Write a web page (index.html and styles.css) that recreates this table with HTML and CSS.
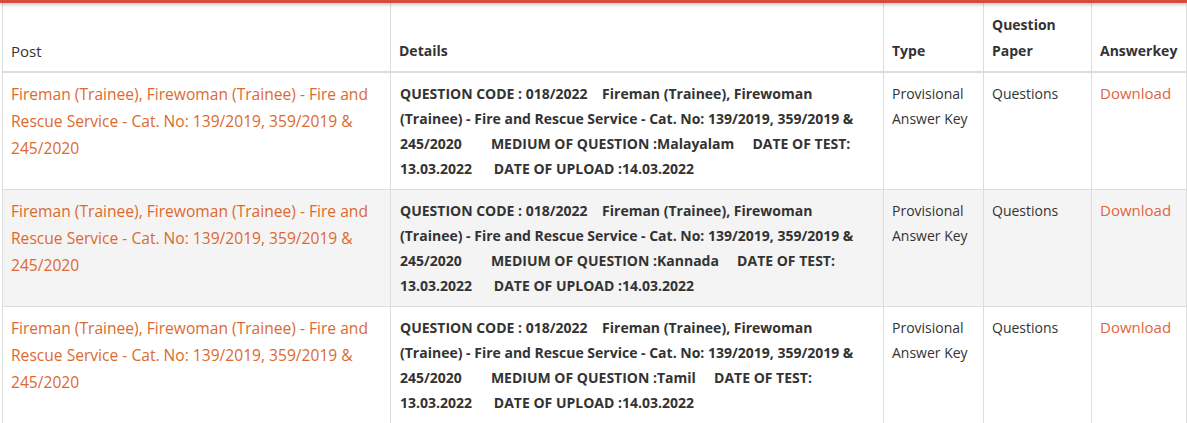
FILE: index.html
```html
<!DOCTYPE html>
<html>
<head>
<meta charset="utf-8">
<link rel="stylesheet" href="styles.css">
</head>
<body>
<div class="topbar"></div>
<div class="wrap">
<table class="results">
  <colgroup>
    <col class="c-post"><col class="c-details"><col class="c-type"><col class="c-qp"><col class="c-ak">
  </colgroup>
  <thead>
    <tr>
      <th class="th-post">Post</th>
      <th>Details</th>
      <th>Type</th>
      <th>Question Paper</th>
      <th>Answerkey</th>
    </tr>
  </thead>
  <tbody>
    <tr>
      <td class="post"><a href="#">Fireman (Trainee), Firewoman (Trainee) - Fire and Rescue Service - Cat. No: 139/2019, 359/2019 &amp; 245/2020</a></td>
      <td class="details">QUESTION CODE : 018/2022 &nbsp;&nbsp; Fireman (Trainee), Firewoman (Trainee) - Fire and Rescue Service - Cat. No: 139/2019, 359/2019 &amp; 245/2020 &nbsp;&nbsp;&nbsp;&nbsp;&nbsp;&nbsp; MEDIUM OF QUESTION :Malayalam &nbsp;&nbsp;&nbsp; DATE OF TEST: 13.03.2022 &nbsp;&nbsp;&nbsp;&nbsp; DATE OF UPLOAD :14.03.2022</td>
      <td>Provisional Answer Key</td>
      <td>Questions</td>
      <td><a class="dl" href="#">Download</a></td>
    </tr>
    <tr class="alt">
      <td class="post"><a href="#">Fireman (Trainee), Firewoman (Trainee) - Fire and Rescue Service - Cat. No: 139/2019, 359/2019 &amp; 245/2020</a></td>
      <td class="details">QUESTION CODE : 018/2022 &nbsp;&nbsp; Fireman (Trainee), Firewoman (Trainee) - Fire and Rescue Service - Cat. No: 139/2019, 359/2019 &amp; 245/2020 &nbsp;&nbsp;&nbsp;&nbsp;&nbsp;&nbsp; MEDIUM OF QUESTION :Kannada &nbsp;&nbsp;&nbsp; DATE OF TEST: 13.03.2022 &nbsp;&nbsp;&nbsp;&nbsp; DATE OF UPLOAD :14.03.2022</td>
      <td>Provisional Answer Key</td>
      <td>Questions</td>
      <td><a class="dl" href="#">Download</a></td>
    </tr>
    <tr>
      <td class="post"><a href="#">Fireman (Trainee), Firewoman (Trainee) - Fire and Rescue Service - Cat. No: 139/2019, 359/2019 &amp; 245/2020</a></td>
      <td class="details">QUESTION CODE : 018/2022 &nbsp;&nbsp; Fireman (Trainee), Firewoman (Trainee) - Fire and Rescue Service - Cat. No: 139/2019, 359/2019 &amp; 245/2020 &nbsp;&nbsp;&nbsp;&nbsp;&nbsp;&nbsp; MEDIUM OF QUESTION :Tamil &nbsp;&nbsp;&nbsp; DATE OF TEST: 13.03.2022 &nbsp;&nbsp;&nbsp;&nbsp; DATE OF UPLOAD :14.03.2022</td>
      <td>Provisional Answer Key</td>
      <td>Questions</td>
      <td><a class="dl" href="#">Download</a></td>
    </tr>
  </tbody>
</table>
</div>
</body>
</html>
```

FILE: styles.css
```css
html, body {
  margin: 0;
  padding: 0;
  background: #fff;
}
body {
  font-family: "Open Sans", "Liberation Sans", sans-serif;
  color: #333;
  font-size: 14px;
  overflow: hidden;
}
.topbar {
  height: 3px;
  background: #d64c3b;
  box-shadow: 0 1px 4px rgba(0, 0, 0, 0.35);
  position: relative;
  z-index: 1;
}
.wrap {
  padding: 0 2px;
}
.results {
  width: 1184px;
  border-collapse: collapse;
  table-layout: fixed;
}
.c-post { width: 388px; }
.c-details { width: 493px; }
.c-type { width: 100px; }
.c-qp { width: 108px; }
.c-ak { width: 95px; }
.results th,
.results td {
  border: 1px solid #ddd;
  text-align: left;
}
.results th {
  border-top: 0;
  border-bottom: 2px solid #ddd;
  vertical-align: bottom;
  font-weight: 700;
  font-size: 14px;
  line-height: 26px;
  padding: 9px 8px 7px 8px;
  color: #333;
}
.results th.th-post {
  font-weight: 400;
  font-size: 15px;
}
.results td {
  vertical-align: top;
  padding: 8px 8px 8px 8px;
  line-height: 25px;
  font-size: 14px;
}
.results td.post {
  font-size: 15.6px;
  line-height: 27px;
}
.results td.details {
  font-weight: 700;
  padding-left: 9px;
}
.results tr.alt td {
  background: #f4f4f4;
}
.results a {
  color: #dc6a30;
  text-decoration: none;
}
.results a.dl {
  color: #e0653f;
  font-size: 15px;
}
```
